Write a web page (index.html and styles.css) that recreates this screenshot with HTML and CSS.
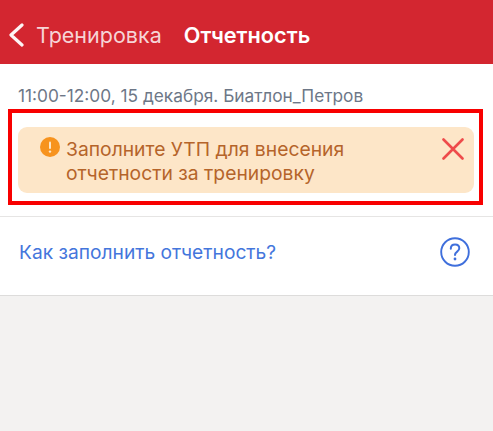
FILE: index.html
```html
<!DOCTYPE html>
<html lang="ru">
<head>
<meta charset="utf-8">
<title>Отчетность</title>
<link rel="stylesheet" href="styles.css">
</head>
<body>
<header class="topbar">
  <svg class="back" width="16" height="26" viewBox="0 0 16 26"><path d="M14 3 3 13l11 10" fill="none" stroke="#fff" stroke-width="3.200" stroke-linecap="round" stroke-linejoin="round" opacity=".95"/></svg>
  <span class="crumb">Тренировка</span>
  <span class="title">Отчетность</span>
</header>
<section class="content">
  <p class="meta">11:00-12:00, 15 декабря. Биатлон_Петров</p>
  <div class="highlight">
    <div class="banner">
      <svg class="warn" width="20" height="20" viewBox="0 0 20 20"><circle cx="10" cy="10" r="10" fill="#f7931e"/><rect x="9" y="4.500" width="2" height="7.500" rx="1" fill="#fde6c8"/><circle cx="10" cy="14.600" r="1.200" fill="#fde6c8"/></svg>
      <p class="banner-text">Заполните УТП для внесения отчетности за тренировку</p>
      <svg class="close" width="22" height="22" viewBox="0 0 22 22"><path d="M1.500 1.500l19 19M20.500 1.500l-19 19" fill="none" stroke="#ee4b4b" stroke-width="2.600" stroke-linecap="round"/></svg>
    </div>
  </div>
</section>
<section class="help">
  <span class="help-link">Как заполнить отчетность?</span>
  <svg class="help-icon" width="30" height="30" viewBox="0 0 30 30"><circle cx="15" cy="15" r="13.800" fill="none" stroke="#3f6fdc" stroke-width="1.900"/><path d="M10.800 11.800c0-2.600 1.900-4.200 4.300-4.200s4.200 1.500 4.200 3.700c0 3.300-4.300 3.300-4.300 6.700" fill="none" stroke="#3f6fdc" stroke-width="2" stroke-linecap="round"/><circle cx="15" cy="22" r="1.400" fill="#3f6fdc"/></svg>
</section>
</body>
</html>
```
FILE: styles.css
```css
* { box-sizing: border-box; }
html, body { margin: 0; height: 100%; }
body {
  background: #f3f2f1;
  font-family: Inter, "Liberation Sans", sans-serif;
  overflow: hidden;
}
.topbar {
  height: 64px;
  background: #d32630;
  display: flex;
  align-items: center;
  padding: 6px 0 0 8px;
  color: #fff;
}
.back { flex: none; }
.crumb {
  margin-left: 12px;
  font-size: 21.500px;
  color: #f6d4d6;
}
.title {
  margin-left: 22px;
  font-size: 21.700px;
  font-weight: 600;
}
.content {
  background: #fff;
  padding: 22px 10px 11px 8px;
  border-bottom: 1px solid #e6e5e4;
}
.meta {
  margin: 0 0 3px 10px;
  font-size: 17.300px;
  line-height: 20px;
  color: #6d7787;
}
.highlight {
  border: 4px solid #f80000;
  padding: 14px 5px 8px 6px;
  height: 96px;
}
.banner {
  background: #fde6c8;
  border-radius: 9px;
  height: 66px;
  display: flex;
  align-items: flex-start;
  padding: 10px 10px 0 22px;
}
.warn { flex: none; margin-right: 6px; }
.banner-text {
  margin: 0;
  flex: 1;
  font-size: 19.300px;
  line-height: 24px;
  color: #b5642a;
  padding-right: 80px;
}
.close { flex: none; margin-top: 1px; }
.help {
  background: #fff;
  height: 79px;
  display: flex;
  align-items: center;
  justify-content: space-between;
  padding: 0 23px 9px 19px;
  border-bottom: 1px solid #dddcdb;
}
.help-link {
  font-size: 19.200px;
  color: #4476dc;
}
```
